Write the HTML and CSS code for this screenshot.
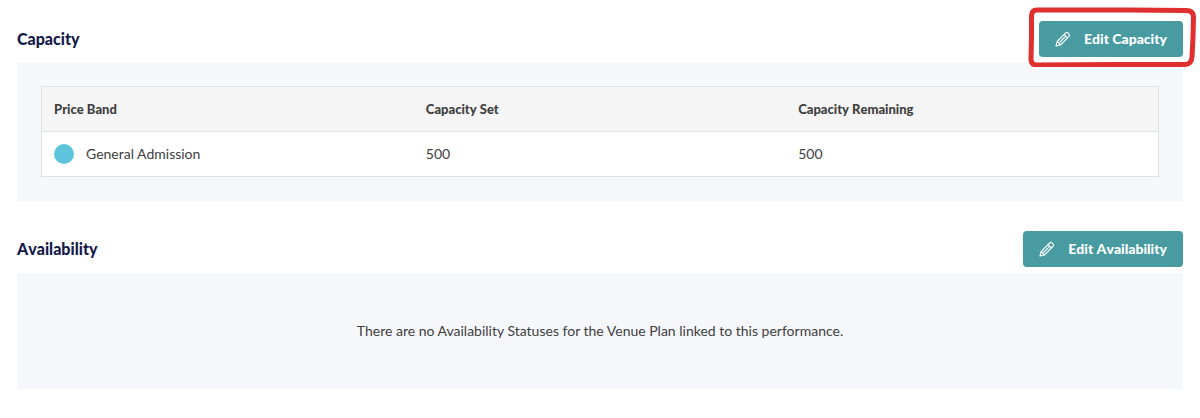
FILE: index.html
```html
<!DOCTYPE html>
<html lang="en">
<head>
<meta charset="UTF-8">
<meta name="viewport" content="width=device-width, initial-scale=1.0">
<title>Capacity and Availability</title>
<link rel="stylesheet" href="styles.css">
</head>

<body>
    <!-- pencil icon, used by both edit buttons -->
    <svg class="sprite" aria-hidden="true">
        <symbol id="pencil" viewBox="0 0 16 16">
            <path d="M1 15 L2.2 10.4 L10.7 1.9 Q11.8 .9 12.9 1.9 L14.1 3.1 Q15.1 4.2 14.1 5.3 L5.6 13.8 Z M2.2 10.4 L5.6 13.8 M9.2 3.4 L12.6 6.8 M4.5 11.5 L10.6 5.4" />
        </symbol>
    </svg>

    <div id="wrapper">
        <section class="section">
            <div class="section-header">
                <h2>Capacity</h2>
                <div class="highlight">
                    <button type="button" class="button">
                        <svg class="icon" aria-hidden="true"><use href="#pencil" /></svg>
                        Edit Capacity
                    </button>
                    <svg class="highlight-ring" viewBox="0 0 168 60" preserveAspectRatio="none" aria-hidden="true">
                        <path d="M9 3 L100 3 L158 3.5 Q165.5 3.5 165.5 10 L165 30 L164 50 Q163.500 57.500 157 57.500 L90 57.500 L9 58 Q3 58 3 52 L3.500 30 L3.500 9 Q3.500 3 9 3 Z" />
                    </svg>
                </div>
            </div>
            <div class="panel">
                <table class="table">
                    <thead>
                        <tr>
                            <th>Price Band</th>
                            <th>Capacity Set</th>
                            <th>Capacity Remaining</th>
                        </tr>
                    </thead>
                    <tbody>
                        <tr>
                            <td><div class="band"><span class="dot"></span>General Admission</div></td>
                            <td>500</td>
                            <td>500</td>
                        </tr>
                    </tbody>
                </table>
            </div>
        </section>

        <section class="section">
            <div class="section-header">
                <h2>Availability</h2>
                <button type="button" class="button">
                    <svg class="icon" aria-hidden="true"><use href="#pencil" /></svg>
                    Edit Availability
                </button>
            </div>
            <div class="panel panel-empty">
                <p>There are no Availability Statuses for the Venue Plan linked to this performance.</p>
            </div>
        </section>
    </div>
</body>
</html>
```

FILE: styles.css
```css
*
{
    box-sizing: border-box;
}
body
{
    margin: 0;
    background-color: #fff;
    color: #404040;
    font-family: Lato, "Liberation Sans", sans-serif;
    font-size: 14px;
    line-height: 20px;
}
#wrapper
{
    padding: 21px 17px;
}
.sprite
{
    display: none;
}
.section + .section
{
    margin-top: 30px;
}
.section-header
{
    display: flex;
    align-items: center;
    justify-content: space-between;
    margin-bottom: 6px;
}
h2,
.button,
.table th
{
    font-weight: 900;
    font-kerning: none;
}
h2
{
    margin: 0;
    color: #141b4a;
    font-size: 16px;
}
.button
{
    display: flex;
    align-items: center;
    gap: 13px;
    height: 36px;
    padding: 0 16px 1px;
    border: 0;
    border-radius: 4px;
    background-color: #479ba1;
    color: #fff;
    font-family: inherit;
    font-size: 14px;
    cursor: pointer;
}
.button:hover
{
    background-color: #3d888d;
}
.icon
{
    width: 16px;
    height: 16px;
    fill: none;
    stroke: #fff;
    stroke-width: 1.2;
    stroke-linejoin: round;
}
.highlight
{
    position: relative;
}
.highlight-ring
{
    position: absolute;
    top: -14px;
    left: -11px;
    width: calc(100% + 24px);
    height: calc(100% + 24px);
    fill: none;
    stroke: #e02f2f;
    stroke-width: 5;
    stroke-linejoin: round;
    pointer-events: none;
}
.panel
{
    padding: 23px 24px 24px;
    background-color: #f6f7fa;
}
.panel-empty
{
    padding: 48px 24px;
    text-align: center;
}
.panel-empty p
{
    margin: 0;
}
.table
{
    width: 100%;
    border: 1px solid #e0e1e2;
    border-collapse: collapse;
    table-layout: fixed;
    background-color: #fff;
}
.table th,
.table td
{
    padding: 12px;
    text-align: left;
}
.table th
{
    border-bottom: 1px solid #e0e1e2;
    background-color: #f5f5f5;
    font-size: 13px;
}
.band
{
    display: flex;
    align-items: center;
    gap: 12px;
}
.dot
{
    width: 20px;
    height: 20px;
    border-radius: 50%;
    background-color: #5ec4dc;
}
```
